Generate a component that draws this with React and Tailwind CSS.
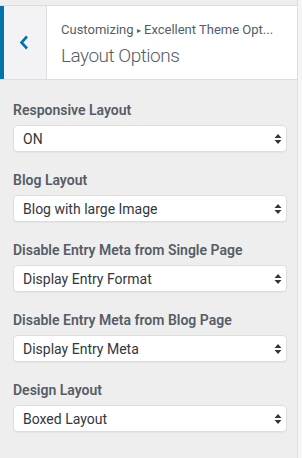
const fields = [
    { label: 'Responsive Layout', value: 'ON' },
    { label: 'Blog Layout', value: 'Blog with large Image' },
    { label: 'Disable Entry Meta from Single Page', value: 'Display Entry Format' },
    { label: 'Disable Entry Meta from Blog Page', value: 'Display Entry Meta' },
    { label: 'Design Layout', value: 'Boxed Layout' },
];

function UpDown() {
    return (
        <svg width="8" height="12" viewBox="0 0 8 12" className="shrink-0">
            <path d="M4 1 L7.5 5 H0.5 Z" fill="#32373c" />
            <path d="M4 11 L7.5 7 H0.5 Z" fill="#32373c" />
        </svg>
    );
}

function Field({ label, value }) {
    return (
        <div className="flex flex-col">
            <div className="h-[34px] pt-[5px] flex items-center text-[14px] font-semibold text-[#555d66] leading-none">
                {label}
            </div>
            <div className="h-[27px] mt-[1px] bg-white border border-[#dddddd] rounded-[4px] flex items-center justify-between pl-[9px] pr-[4px] shadow-[0_1px_1px_rgba(0,0,0,0.04)]">
                <span className="text-[14px] text-[#32373c] leading-none">{value}</span>
                <UpDown />
            </div>
        </div>
    );
}

export default function App() {
    return (
        <div
            className="w-[302px] h-[458px] bg-[#f5f5f5] flex overflow-hidden"
            style={{ fontFamily: '"Roboto", "Noto Sans", sans-serif' }}
        >
            <div className="w-[298px] bg-[#eeeeee] border-r border-[#dddddd] flex flex-col">
                <div className="h-[6px] border-b border-[#dddddd]" />
                <div className="h-[74px] flex bg-white border-b border-[#dddddd]">
                    <div className="w-[47px] bg-[#f3f3f5] border-l-4 border-[#0073aa] border-r border-r-[#dddddd] flex items-center justify-center">
                        <svg width="10" height="15" viewBox="0 0 10 15" className="ml-[-2px]">
                            <path d="M8 1.5 L2.5 7.5 L8 13.5" fill="none" stroke="#0073aa" strokeWidth="2.6" />
                        </svg>
                    </div>
                    <div className="flex-1 pl-[14px] pt-[16px] min-w-0">
                        <div className="text-[13px] text-[#555d66] leading-[16px] whitespace-nowrap">
                            Customizing <span className="text-[8px] align-middle">▸</span> Excellent Theme Opt...
                        </div>
                        <div className="text-[19px] font-light text-[#555d66] leading-[24px] mt-[5px] tracking-[-0.5px]">
                            Layout Options
                        </div>
                    </div>
                </div>
                <div className="flex flex-col gap-[8px] pl-[13px] pr-[10px] pt-[10px]">
                    {fields.map((f) => (
                        <Field key={f.label} label={f.label} value={f.value} />
                    ))}
                </div>
            </div>
        </div>
    );
}
